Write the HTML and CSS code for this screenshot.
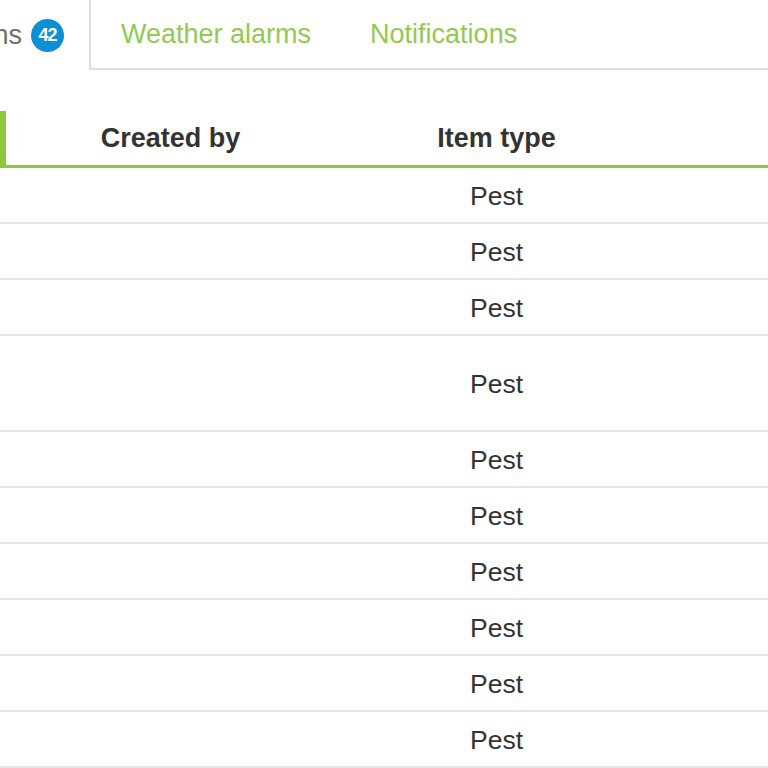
FILE: index.html
```html
<!DOCTYPE html>
<html>
<head>
<meta charset="utf-8">
<link rel="stylesheet" href="styles.css">
</head>
<body>
<div class="page">
  <div class="tabs">
    <div class="tab active"><span class="tab-label">Observations</span><span class="badge">42</span></div>
    <div class="tab">Weather alarms</div>
    <div class="tab">Notifications</div>
    <div class="tab-rest"></div>
  </div>
  <div class="table">
    <div class="row head">
      <div class="cell bar"></div>
      <div class="cell">Created by</div>
      <div class="cell">Item type</div>
      <div class="cell"></div>
    </div>
    <div class="row"><div class="cell"></div><div class="cell"></div><div class="cell">Pest</div><div class="cell"></div></div>
    <div class="row"><div class="cell"></div><div class="cell"></div><div class="cell">Pest</div><div class="cell"></div></div>
    <div class="row"><div class="cell"></div><div class="cell"></div><div class="cell">Pest</div><div class="cell"></div></div>
    <div class="row tall"><div class="cell"></div><div class="cell"></div><div class="cell">Pest</div><div class="cell"></div></div>
    <div class="row"><div class="cell"></div><div class="cell"></div><div class="cell">Pest</div><div class="cell"></div></div>
    <div class="row"><div class="cell"></div><div class="cell"></div><div class="cell">Pest</div><div class="cell"></div></div>
    <div class="row"><div class="cell"></div><div class="cell"></div><div class="cell">Pest</div><div class="cell"></div></div>
    <div class="row"><div class="cell"></div><div class="cell"></div><div class="cell">Pest</div><div class="cell"></div></div>
    <div class="row"><div class="cell"></div><div class="cell"></div><div class="cell">Pest</div><div class="cell"></div></div>
    <div class="row"><div class="cell"></div><div class="cell"></div><div class="cell">Pest</div><div class="cell"></div></div>
  </div>
</div>
</body>
</html>
```
FILE: styles.css
```css
html, body {
  margin: 0;
  padding: 0;
  background: #fff;
}
body {
  font-family: "Liberation Sans", Arial, sans-serif;
  color: #333;
  overflow: hidden;
}
.page {
  width: 768px;
  height: 768px;
  overflow: hidden;
}
.tabs {
  display: flex;
  height: 70px;
}
.tab {
  box-sizing: border-box;
  height: 70px;
  display: flex;
  align-items: center;
  padding: 0 29px 0 30px;
  font-size: 27px;
  color: #93c952;
  border-bottom: 2px solid #dedede;
  white-space: nowrap;
}
.tab.active {
  margin-left: -148px;
  width: 239px;
  padding: 0 25px 0 0;
  justify-content: flex-end;
  color: #6f6f6f;
  border-bottom: none;
  border-right: 2px solid #dedede;
}
.tab-rest {
  flex: 1;
  border-bottom: 2px solid #dedede;
}
.badge {
  display: inline-flex;
  align-items: center;
  justify-content: center;
  width: 33px;
  height: 33px;
  margin-left: 9px;
  border-radius: 50%;
  background: #0b8fd5;
  color: #fff;
  font-size: 18px;
  font-weight: bold;
  letter-spacing: -1px;
}
.table {
  margin-top: 41px;
}
.row {
  display: grid;
  grid-template-columns: 6px 329px 323px 1fr;
  height: 56px;
  box-sizing: border-box;
  border-bottom: 2px solid #e4e4e4;
}
.row.tall {
  height: 96px;
}
.row.head {
  height: 57px;
  border-bottom: 3px solid #8dc63f;
  font-weight: bold;
  font-size: 27px;
}
.cell {
  display: flex;
  align-items: center;
  justify-content: center;
  font-size: 26.5px;
  padding-top: 2px;
}
.row.head .cell {
  font-size: 27px;
  padding-top: 0;
}
.cell.bar {
  background: #8dc63f;
}
```
